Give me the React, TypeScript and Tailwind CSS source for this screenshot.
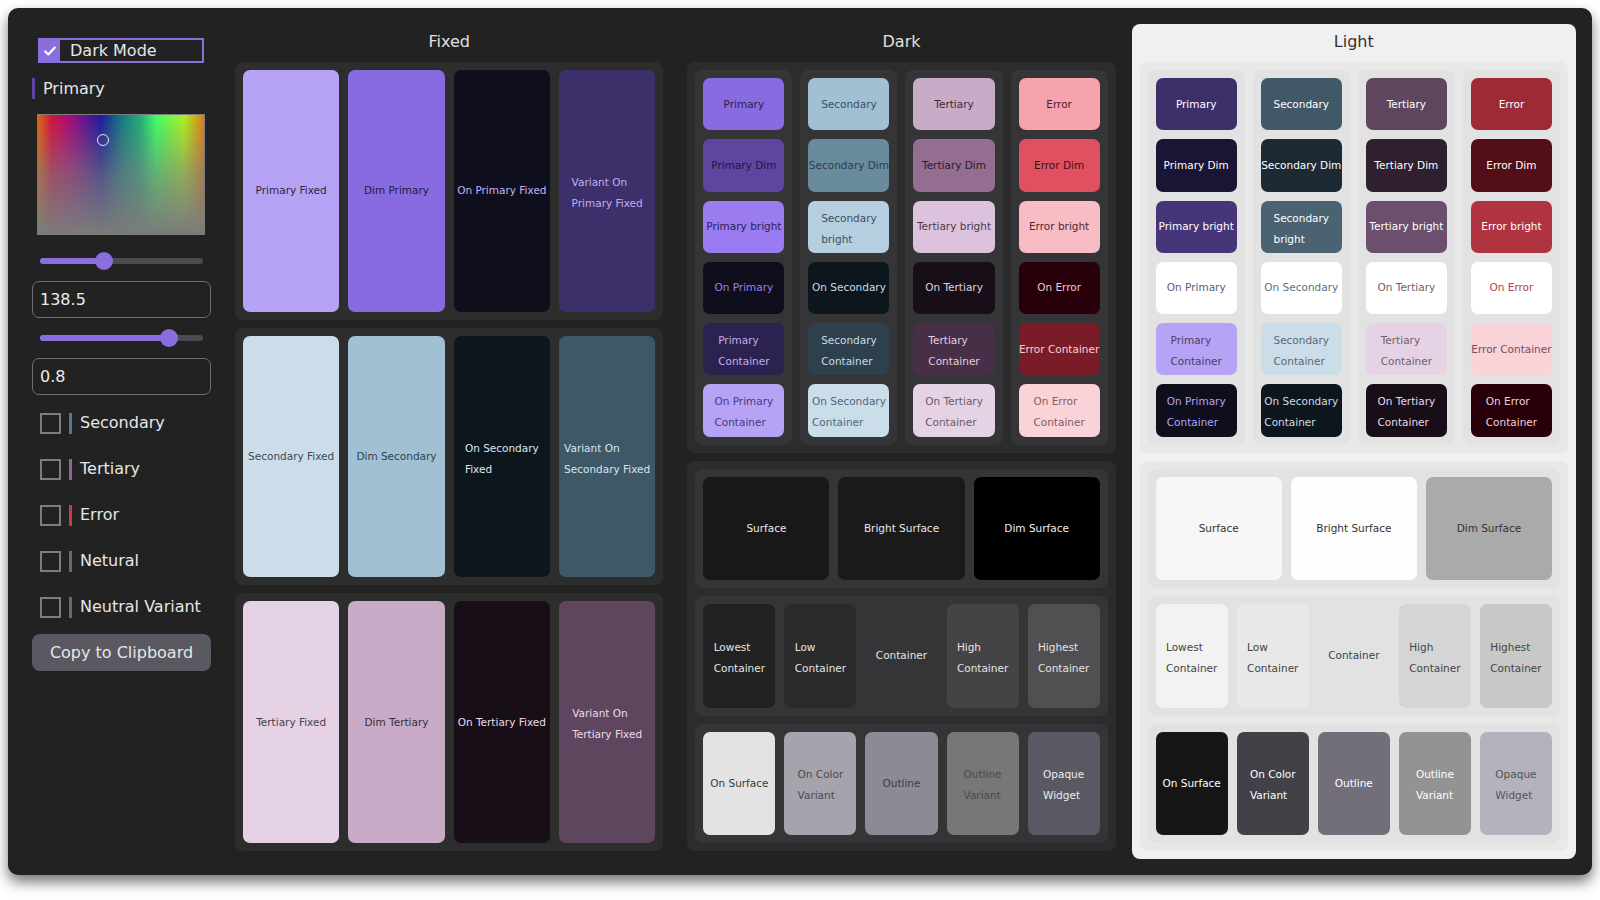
import clsx from "clsx";

type Swatch = {
  lines: string[];
  color: string;
};

const fixedRows: Swatch[][] = [
  [
    { lines: ["Primary Fixed"], color: "bg-[#b6a3f5] text-[#2c2444]" },
    { lines: ["Dim Primary"], color: "bg-[#886be0] text-[#231a40]" },
    { lines: ["On Primary Fixed"], color: "bg-[#0f0e1c] text-[#c4b3f7]" },
    { lines: ["Variant On", "Primary Fixed"], color: "bg-[#3c2f6a] text-[#c0aff2]" },
  ],
  [
    { lines: ["Secondary Fixed"], color: "bg-[#cbdde9] text-[#3c4a54]" },
    { lines: ["Dim Secondary"], color: "bg-[#a1c0d4] text-[#2e4250]" },
    { lines: ["On Secondary", "Fixed"], color: "bg-[#0d161d] text-[#dce8f0]" },
    { lines: ["Variant On", "Secondary Fixed"], color: "bg-[#3f5868] text-[#d6e4ee]" },
  ],
  [
    { lines: ["Tertiary Fixed"], color: "bg-[#e5d3e5] text-[#4a3c4a]" },
    { lines: ["Dim Tertiary"], color: "bg-[#c7abc7] text-[#3a2c3a]" },
    { lines: ["On Tertiary Fixed"], color: "bg-[#170e17] text-[#eadcea]" },
    { lines: ["Variant On", "Tertiary Fixed"], color: "bg-[#5e475e] text-[#eadcea]" },
  ],
];

const darkPalette: Swatch[][] = [
  [
    { lines: ["Primary"], color: "bg-[#886be0] text-[#2a1f50]" },
    { lines: ["Primary Dim"], color: "bg-[#5d45a0] text-[#1f1540]" },
    { lines: ["Primary bright"], color: "bg-[#9b7cf0] text-[#2a1f50]" },
    { lines: ["On Primary"], color: "bg-[#0f0e1c] text-[#9a7ff0]" },
    { lines: ["Primary", "Container"], color: "bg-[#2c224f] text-[#c0aef5]" },
    { lines: ["On Primary", "Container"], color: "bg-[#b6a3f5] text-[#4a3a80]" },
  ],
  [
    { lines: ["Secondary"], color: "bg-[#a1c0d4] text-[#3a5060]" },
    { lines: ["Secondary Dim"], color: "bg-[#6a8a9e] text-[#2a3e4a]" },
    { lines: ["Secondary", "bright"], color: "bg-[#b6cfe0] text-[#3a5060]" },
    { lines: ["On Secondary"], color: "bg-[#0d161d] text-[#c8dce8]" },
    { lines: ["Secondary", "Container"], color: "bg-[#2d404c] text-[#c8dce8]" },
    { lines: ["On Secondary", "Container"], color: "bg-[#cbdde9] text-[#506878]" },
  ],
  [
    { lines: ["Tertiary"], color: "bg-[#c7abc7] text-[#3a2a3a]" },
    { lines: ["Tertiary Dim"], color: "bg-[#946e90] text-[#2a1a2a]" },
    { lines: ["Tertiary bright"], color: "bg-[#dcc2dc] text-[#4a3a4a]" },
    { lines: ["On Tertiary"], color: "bg-[#170e17] text-[#e0d0e0]" },
    { lines: ["Tertiary", "Container"], color: "bg-[#472f47] text-[#e0d0e0]" },
    { lines: ["On Tertiary", "Container"], color: "bg-[#e5d3e5] text-[#6a5a6a]" },
  ],
  [
    { lines: ["Error"], color: "bg-[#f7a3ae] text-[#4a2028]" },
    { lines: ["Error Dim"], color: "bg-[#e05060] text-[#3a1018]" },
    { lines: ["Error bright"], color: "bg-[#f8bcc4] text-[#502830]" },
    { lines: ["On Error"], color: "bg-[#28000a] text-[#f0c8d0]" },
    { lines: ["Error Container"], color: "bg-[#7a1c28] text-[#f8d0d8]" },
    { lines: ["On Error", "Container"], color: "bg-[#fad3d8] text-[#806068]" },
  ],
];

const lightPalette: Swatch[][] = [
  [
    { lines: ["Primary"], color: "bg-[#3c2f6a] text-white" },
    { lines: ["Primary Dim"], color: "bg-[#1b1535] text-white" },
    { lines: ["Primary bright"], color: "bg-[#463578] text-white" },
    { lines: ["On Primary"], color: "bg-white text-[#605878]" },
    { lines: ["Primary", "Container"], color: "bg-[#b6a3f5] text-[#4a4060]" },
    { lines: ["On Primary", "Container"], color: "bg-[#0f0e1c] text-[#b6a3f5]" },
  ],
  [
    { lines: ["Secondary"], color: "bg-[#415867] text-white" },
    { lines: ["Secondary Dim"], color: "bg-[#1e2a33] text-white" },
    { lines: ["Secondary", "bright"], color: "bg-[#4a6272] text-white" },
    { lines: ["On Secondary"], color: "bg-white text-[#607078]" },
    { lines: ["Secondary", "Container"], color: "bg-[#cbdde9] text-[#606870]" },
    { lines: ["On Secondary", "Container"], color: "bg-[#0d161d] text-[#d0dce4]" },
  ],
  [
    { lines: ["Tertiary"], color: "bg-[#5e475e] text-white" },
    { lines: ["Tertiary Dim"], color: "bg-[#2e202e] text-white" },
    { lines: ["Tertiary bright"], color: "bg-[#6c4f6c] text-white" },
    { lines: ["On Tertiary"], color: "bg-white text-[#706070]" },
    { lines: ["Tertiary", "Container"], color: "bg-[#e5d3e5] text-[#706070]" },
    { lines: ["On Tertiary", "Container"], color: "bg-[#170e17] text-[#e8d8e8]" },
  ],
  [
    { lines: ["Error"], color: "bg-[#9e2a36] text-white" },
    { lines: ["Error Dim"], color: "bg-[#520f18] text-white" },
    { lines: ["Error bright"], color: "bg-[#b0343f] text-white" },
    { lines: ["On Error"], color: "bg-white text-[#b04050]" },
    { lines: ["Error Container"], color: "bg-[#fad3d8] text-[#705058]" },
    { lines: ["On Error", "Container"], color: "bg-[#28000a] text-[#f0d0d8]" },
  ],
];

const darkSurfaces: Swatch[][] = [
  [
    { lines: ["Surface"], color: "bg-[#181818] text-[#e8e8e8]" },
    { lines: ["Bright Surface"], color: "bg-[#1a1a1a] text-[#e8e8e8]" },
    { lines: ["Dim Surface"], color: "bg-black text-[#f0f0f0]" },
  ],
  [
    { lines: ["Lowest", "Container"], color: "bg-[#222222] text-[#e4e4e4]" },
    { lines: ["Low", "Container"], color: "bg-[#2b2b2b] text-[#e4e4e4]" },
    { lines: ["Container"], color: "bg-[#353537] text-[#e4e4e4]" },
    { lines: ["High", "Container"], color: "bg-[#444446] text-[#e4e4e4]" },
    { lines: ["Highest", "Container"], color: "bg-[#505052] text-[#e4e4e4]" },
  ],
  [
    { lines: ["On Surface"], color: "bg-[#e3e3e3] text-[#3a3a3a]" },
    { lines: ["On Color", "Variant"], color: "bg-[#a5a3ac] text-[#4a4a52]" },
    { lines: ["Outline"], color: "bg-[#8c8a94] text-[#3c3c44]" },
    { lines: ["Outline", "Variant"], color: "bg-[#777777] text-[#4a4a4a]" },
    { lines: ["Opaque", "Widget"], color: "bg-[#5a5862] text-[#ececec]" },
  ],
];

const lightSurfaces: Swatch[][] = [
  [
    { lines: ["Surface"], color: "bg-[#f7f7f7] text-[#333333]" },
    { lines: ["Bright Surface"], color: "bg-[#fefefe] text-[#333333]" },
    { lines: ["Dim Surface"], color: "bg-[#aaaaaa] text-[#333333]" },
  ],
  [
    { lines: ["Lowest", "Container"], color: "bg-[#f2f2f2] text-[#444444]" },
    { lines: ["Low", "Container"], color: "bg-[#e8e8e8] text-[#444444]" },
    { lines: ["Container"], color: "bg-[#e2e2e2] text-[#444444]" },
    { lines: ["High", "Container"], color: "bg-[#d5d5d5] text-[#444444]" },
    { lines: ["Highest", "Container"], color: "bg-[#c8c8c8] text-[#444444]" },
  ],
  [
    { lines: ["On Surface"], color: "bg-[#161616] text-white" },
    { lines: ["On Color", "Variant"], color: "bg-[#424147] text-white" },
    { lines: ["Outline"], color: "bg-[#726f7a] text-white" },
    { lines: ["Outline", "Variant"], color: "bg-[#939393] text-white" },
    { lines: ["Opaque", "Widget"], color: "bg-[#b4b2bc] text-[#555555]" },
  ],
];

const sidebarToggles = [
  { label: "Secondary", bar: "bg-[#5a7a8c]" },
  { label: "Tertiary", bar: "bg-[#8a6a8a]" },
  { label: "Error", bar: "bg-[#d03848]" },
  { label: "Netural", bar: "bg-[#6a6a6a]" },
  { label: "Neutral Variant", bar: "bg-[#6a6870]" },
];

function Card({ swatch, className }: { swatch: Swatch; className?: string }) {
  return (
    <div
      className={clsx(
        "flex min-w-0 items-center justify-center rounded-[7px] text-[10.5px] leading-[21px]",
        swatch.color,
        className,
      )}
    >
      <div
        className={clsx(
          "w-fit whitespace-nowrap text-left",
          swatch.lines.length > 1 && "translate-y-[2px]",
        )}
      >
        {swatch.lines.map((line) => (
          <div key={line}>{line}</div>
        ))}
      </div>
    </div>
  );
}

function Slider({ percent }: { percent: number }) {
  return (
    <div className="relative ml-[8px] h-[18px] w-[163px]">
      <div className="absolute left-0 right-0 top-[6px] h-[6px] rounded-full bg-[#4b4a50]" />
      <div
        className="absolute left-0 top-[6px] h-[6px] rounded-full bg-[#8a6ee0]"
        style={{ width: `${percent}%` }}
      />
      <div
        className="absolute top-0 h-[18px] w-[18px] -translate-x-1/2 rounded-full bg-[#8a6ee0]"
        style={{ left: `${percent}%` }}
      />
    </div>
  );
}

function Sidebar() {
  return (
    <aside className="flex w-[195px] shrink-0 flex-col px-2 text-[16px] text-[#e6e6e6]">
      <div className="ml-[6px] mt-[14px] flex h-[25px] w-[166px] items-center border-2 border-[#8a6fdc]">
        <div className="flex h-full w-[20px] items-center justify-center bg-[#8a6fdc]">
          <svg viewBox="0 0 16 16" className="h-[14px] w-[14px]" fill="none" stroke="white" strokeWidth="2.4">
            <path d="M2.5 8.5l3.5 3.5 7.5-8" strokeLinecap="round" strokeLinejoin="round" />
          </svg>
        </div>
        <span className="ml-[10px] leading-none">Dark Mode</span>
      </div>

      <div className="mt-[15px] flex h-[21px] items-center">
        <div className="h-[21px] w-[3px] bg-[#5b45a0]" />
        <span className="ml-[8px]">Primary</span>
      </div>

      <div className="relative ml-[5px] mt-[15px] h-[121px] w-[168px] border-[1.5px] border-[#7c7c7c] bg-[linear-gradient(to_bottom,rgba(124,124,124,0)_0%,rgba(124,124,124,0.6)_50%,#7b7b7b_100%),linear-gradient(to_right,#e0680f_0%,#d3123f_8%,#a10a7e_20%,#1c1a9c_38%,#137684_50%,#22b07a_62%,#3cff66_71%,#aef023_88%,#e07c12_100%)]">
        <div className="absolute left-[59px] top-[19px] h-[12px] w-[12px] rounded-full border-[1.5px] border-[#e8e8e8]" />
      </div>

      <div className="mt-[17px]">
        <Slider percent={39.3} />
      </div>
      <div className="mt-[11px] flex h-[37px] w-[179px] items-center rounded-[7px] border border-[#6e6e6e] px-[7px] text-[#ebebeb]">
        138.5
      </div>
      <div className="mt-[11px]">
        <Slider percent={79} />
      </div>
      <div className="mt-[11px] flex h-[37px] w-[179px] items-center rounded-[7px] border border-[#6e6e6e] px-[7px] text-[#ebebeb]">
        0.8
      </div>

      <div className="mt-[17.5px] flex flex-col gap-[25px]">
        {sidebarToggles.map((toggle) => (
          <div key={toggle.label} className="flex h-[21px] items-center pl-[8px]">
            <div className="h-[21px] w-[21px] border-2 border-[#7d7d80]" />
            <div className={clsx("ml-[8px] h-[21px] w-[3px]", toggle.bar)} />
            <span className="ml-[8px]">{toggle.label}</span>
          </div>
        ))}
      </div>

      <button
        type="button"
        className="mt-[16.5px] flex h-[37px] w-[179px] items-center justify-center rounded-[8px] bg-[#5a5860] text-[#e6e6e6]"
      >
        Copy to Clipboard
      </button>
    </aside>
  );
}

function PaletteGroup({
  columns,
  outer,
  inner,
}: {
  columns: Swatch[][];
  outer: string;
  inner: string;
}) {
  return (
    <div className={clsx("grid flex-1 grid-cols-4 gap-2 rounded-[8px] p-2", outer)}>
      {columns.map((column, index) => (
        <div key={index} className={clsx("flex flex-col gap-[9px] rounded-[8px] p-2", inner)}>
          {column.map((swatch) => (
            <Card key={swatch.lines.join(" ")} swatch={swatch} className="flex-1" />
          ))}
        </div>
      ))}
    </div>
  );
}

function SurfaceGroup({
  rows,
  outer,
  inner,
}: {
  rows: Swatch[][];
  outer: string;
  inner: string;
}) {
  return (
    <div className={clsx("flex flex-1 flex-col gap-2 rounded-[8px] p-2", outer)}>
      {rows.map((row, index) => (
        <div key={index} className={clsx("flex flex-1 gap-[9px] rounded-[8px] p-2", inner)}>
          {row.map((swatch) => (
            <Card key={swatch.lines.join(" ")} swatch={swatch} className="flex-1 basis-0" />
          ))}
        </div>
      ))}
    </div>
  );
}

function Column({
  title,
  light,
  children,
}: {
  title: string;
  light?: boolean;
  children: React.ReactNode;
}) {
  return (
    <section
      className={clsx(
        "flex min-w-0 flex-1 flex-col rounded-[8px] p-2",
        light ? "bg-[#f0f0f0] text-[#333333]" : "text-[#e0e0e0]",
      )}
    >
      <h2 className="h-5 text-center text-[16px] leading-5">{title}</h2>
      <div className="mt-[10px] flex flex-1 flex-col gap-2">{children}</div>
    </section>
  );
}

export default function App() {
  return (
    <div className="h-[900px] w-[1600px] bg-white p-2 font-['DejaVu_Sans',sans-serif]">
      <div className="flex h-[867px] w-full gap-2 rounded-[10px] bg-[#222222] p-4 shadow-[0_7px_14px_rgba(0,0,0,0.55)]">
        <Sidebar />

        <Column title="Fixed">
          {fixedRows.map((row, index) => (
            <div key={index} className="grid flex-1 grid-cols-4 gap-[9px] rounded-[8px] bg-[#2d2d2d] p-2">
              {row.map((swatch) => (
                <Card key={swatch.lines.join(" ")} swatch={swatch} />
              ))}
            </div>
          ))}
        </Column>

        <Column title="Dark">
          <PaletteGroup columns={darkPalette} outer="bg-[#2c2c2c]" inner="bg-[#353537]" />
          <SurfaceGroup rows={darkSurfaces} outer="bg-[#2c2c2c]" inner="bg-[#353537]" />
        </Column>

        <Column title="Light" light>
          <PaletteGroup columns={lightPalette} outer="bg-[#e8e8e8]" inner="bg-[#e2e2e2]" />
          <SurfaceGroup rows={lightSurfaces} outer="bg-[#e8e8e8]" inner="bg-[#e2e2e2]" />
        </Column>
      </div>
    </div>
  );
}
